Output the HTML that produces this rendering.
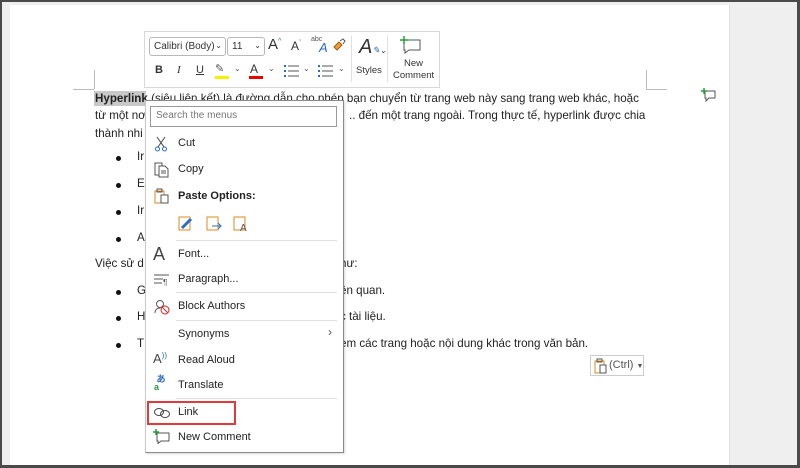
<!DOCTYPE html>
<html><head><meta charset="utf-8"><style>
*{margin:0;padding:0;box-sizing:border-box}
body{width:800px;height:468px;overflow:hidden;background:#fff;font-family:"Liberation Sans",sans-serif;position:relative}
.frame{position:absolute;left:0;top:0;width:800px;height:468px;border:2px solid #4a4a4a;border-right-width:3px;border-bottom-width:3px;background:#efefef}
.page{position:absolute;left:10px;top:5px;width:720px;height:460px;background:#fff;border-right:1px solid #e0e0e0}
.a{position:absolute;white-space:nowrap}
.t{font-size:11.6px;color:#222}
.dot{position:absolute;width:5px;height:5px;border-radius:50%;background:#111}
.mt{position:absolute;left:144px;top:31px;width:296px;height:57px;background:#fff;border:1px solid #d8d8d8}
.cb{position:absolute;border:1px solid #b8b8b8;border-radius:3px;height:19px;font-size:10px;color:#333;padding:3px 0 0 4px}
.menu{position:absolute;left:145px;top:100px;width:199px;height:353px;background:#fff;border:1px solid #8a8a8a;border-left-color:#c8c8c8;box-shadow:1px 1px 2px rgba(0,0,0,.15)}
.mi{position:absolute;left:32px;font-size:11px;color:#222}
.sep{position:absolute;left:30px;right:6px;height:1px;background:#e0e0e0}
.ic{position:absolute}
</style></head><body>
<div class="frame"></div>
<div class="page"></div>
<div class="a" style="left:94px;top:70px;width:1px;height:19px;background:#bbb"></div>
<div class="a" style="left:73px;top:89px;width:21px;height:1px;background:#bbb"></div>
<div class="a" style="left:646px;top:70px;width:1px;height:19px;background:#bbb"></div>
<div class="a" style="left:646px;top:89px;width:21px;height:1px;background:#bbb"></div>
<div class="a" style="left:94px;top:91px;width:52px;height:15px;background:#c8c8c8"></div>
<div class="a t" style="left:95px;top:92px"><b>Hyperlink</b> <span style="text-decoration:underline">(siêu liên kết) là đường dẫn cho phép</span> bạn chuyển từ trang web này sang trang web khác, hoặc</div>
<div class="a t" style="left:95px;top:109px">từ một nơ</div>
<div class="a t" style="left:349px;top:109px">.. đến một trang ngoài. Trong thực tế, hyperlink được chia</div>
<div class="a t" style="left:95px;top:127px">thành nhi</div>
<div class="dot" style="left:116px;top:156px"></div><div class="a t" style="left:137px;top:150px">Ir</div>
<div class="dot" style="left:116px;top:183px"></div><div class="a t" style="left:137px;top:177px">E</div>
<div class="dot" style="left:116px;top:210px"></div><div class="a t" style="left:137px;top:204px">Ir</div>
<div class="dot" style="left:116px;top:237px"></div><div class="a t" style="left:137px;top:231px">A</div>
<div class="a t" style="left:95px;top:257px">Việc sử d</div><div class="a t" style="left:340px;top:257px">hư:</div>
<div class="dot" style="left:116px;top:290px"></div><div class="a t" style="left:137px;top:284px">G</div><div class="a t" style="left:340px;top:284px">ên quan.</div>
<div class="dot" style="left:116px;top:316px"></div><div class="a t" style="left:137px;top:310px">H</div><div class="a t" style="left:340px;top:310px">c tài liệu.</div>
<div class="dot" style="left:116px;top:343px"></div><div class="a t" style="left:137px;top:337px">T</div><div class="a t" style="left:340px;top:337px">em các trang hoặc nội dung khác trong văn bản.</div>
<svg class="ic" style="left:701px;top:88px" width="16" height="14" viewBox="0 0 16 14"><path d="M4 3h10v7H8l-3 3v-3H4z" fill="none" stroke="#555"/><path d="M3 0v6M0 3h6" stroke="#2a9d3a" stroke-width="1.5"/></svg>
<div class="a" style="left:590px;top:355px;width:54px;height:21px;border:1px solid #ccc;background:#fff"></div>
<svg class="ic" style="left:594px;top:358px" width="14" height="16" viewBox="0 0 14 16"><rect x="1" y="3" width="9" height="12" fill="none" stroke="#e08a1e"/><rect x="6" y="7" width="6" height="8" fill="#fff" stroke="#555"/><rect x="3" y="1" width="5" height="3" fill="none" stroke="#555"/></svg>
<div class="a" style="left:609px;top:359px;font-size:11px;color:#555">(Ctrl) <span style="font-size:7px">▼</span></div>
<div class="mt"></div>
<div class="cb" style="left:149px;top:37px;width:77px">Calibri (Body)<span style="position:absolute;right:3px;top:3px;font-size:8px">⌄</span></div>
<div class="cb" style="left:227px;top:37px;width:38px">11<span style="position:absolute;right:3px;top:3px;font-size:8px">⌄</span></div>
<div class="a" style="left:268px;top:36px;font-size:15px;color:#333">A<sup style="font-size:7px;color:#2b6cc4">^</sup></div>
<div class="a" style="left:291px;top:39px;font-size:12px;color:#333">A<sup style="font-size:7px;color:#2b6cc4">ˇ</sup></div>
<div class="a" style="left:311px;top:36px;font-size:7px;color:#555">abc</div><div class="a" style="left:319px;top:40px;font-size:13px;color:#2b6cc4;font-style:italic">A</div>
<svg class="ic" style="left:332px;top:38px" width="14" height="14" viewBox="0 0 14 14"><path d="M2 9l5-5 3 3-5 5z" fill="#f0a030" stroke="#a05a10"/><path d="M8 3l3-2 2 2-2 3" fill="none" stroke="#555"/></svg>
<div class="a" style="left:351px;top:36px;width:1px;height:46px;background:#e0e0e0"></div>
<div class="a" style="left:359px;top:36px;font-size:20px;color:#333;font-style:italic">A<span style="font-size:9px;color:#2b6cc4">✎</span><span style="font-size:8px">⌄</span></div>
<div class="a" style="left:356px;top:65px;font-size:9.5px;color:#333">Styles</div>
<div class="a" style="left:387px;top:36px;width:1px;height:46px;background:#e0e0e0"></div>
<svg class="ic" style="left:400px;top:36px" width="22" height="18" viewBox="0 0 22 18"><path d="M4 4h16v10H9l-4 3v-3H4z" fill="none" stroke="#555"/><path d="M4 0v8M0 4h8" stroke="#2a9d3a" stroke-width="1.5"/></svg>
<div class="a" style="left:404px;top:58px;font-size:9.5px;color:#333">New</div>
<div class="a" style="left:393px;top:70px;font-size:9.5px;color:#333">Comment</div>
<div class="a" style="left:155px;top:64px;font-size:11px;font-weight:bold;color:#333">B</div>
<div class="a" style="left:177px;top:64px;font-size:11px;font-style:italic;font-family:'Liberation Serif',serif;color:#333">I</div>
<div class="a" style="left:196px;top:64px;font-size:11px;text-decoration:underline;color:#333">U</div>
<div class="a" style="left:215px;top:62px;font-size:11px;color:#555">✎</div><div class="a" style="left:215px;top:76px;width:14px;height:3px;background:#f5f000"></div><div class="a" style="left:234px;top:64px;font-size:8px;color:#555">⌄</div>
<div class="a" style="left:250px;top:62px;font-size:12px;color:#333">A</div><div class="a" style="left:249px;top:76px;width:14px;height:3px;background:#e00"></div><div class="a" style="left:268px;top:64px;font-size:8px;color:#555">⌄</div>
<svg class="ic" style="left:284px;top:64px" width="16" height="13" viewBox="0 0 16 13"><g fill="#2b6cc4"><rect x="0" y="1" width="2" height="2"/><rect x="0" y="6" width="2" height="2"/><rect x="0" y="11" width="2" height="2"/></g><g stroke="#555"><path d="M4 2h11M4 7h11M4 12h11"/></g></svg><div class="a" style="left:303px;top:64px;font-size:8px;color:#555">⌄</div>
<svg class="ic" style="left:318px;top:64px" width="16" height="13" viewBox="0 0 16 13"><g fill="#2b6cc4"><rect x="0" y="1" width="2" height="2"/><rect x="0" y="6" width="2" height="2"/><rect x="0" y="11" width="2" height="2"/></g><g stroke="#555"><path d="M4 2h11M4 7h11M4 12h11"/></g></svg><div class="a" style="left:338px;top:64px;font-size:8px;color:#555">⌄</div>
<div class="menu">
<div class="a" style="left:4px;top:5px;width:187px;height:21px;border:1px solid #999;font-size:10px;color:#777;padding:3px 0 0 5px">Search the menus</div>
<svg class="ic" style="left:8px;top:35px" width="14" height="16" viewBox="0 0 14 16"><path d="M3 1l7 10M11 1L4 11" stroke="#444"/><circle cx="3.5" cy="13" r="2" fill="none" stroke="#2b6cc4"/><circle cx="10.5" cy="13" r="2" fill="none" stroke="#2b6cc4"/></svg>
<div class="mi" style="top:36px">Cut</div>
<svg class="ic" style="left:8px;top:61px" width="16" height="16" viewBox="0 0 16 16"><path d="M1 1h7v12H1z" fill="none" stroke="#555"/><path d="M5 4h6l3 3v8H5z" fill="#fff" stroke="#555"/><path d="M7 9h5M7 11h5" stroke="#555"/></svg>
<div class="mi" style="top:62px">Copy</div>
<svg class="ic" style="left:8px;top:87px" width="16" height="16" viewBox="0 0 16 16"><rect x="1" y="3" width="9" height="12" fill="none" stroke="#e08a1e"/><rect x="7" y="7" width="7" height="8" fill="#fff" stroke="#555"/><rect x="3" y="1" width="5" height="3" fill="none" stroke="#555"/></svg>
<div class="mi" style="top:89px;font-weight:bold">Paste Options:</div>
<svg class="ic" style="left:32px;top:113px" width="16" height="18" viewBox="0 0 16 18"><rect x="1" y="3" width="11" height="13" fill="none" stroke="#e08a1e"/><path d="M4 14l9-9" stroke="#2b6cc4" stroke-width="3"/></svg>
<svg class="ic" style="left:60px;top:113px" width="16" height="18" viewBox="0 0 16 18"><rect x="1" y="3" width="11" height="13" fill="none" stroke="#e08a1e"/><path d="M6 12h9M12 9l3 3-3 3" fill="none" stroke="#2b6cc4"/></svg>
<svg class="ic" style="left:87px;top:113px" width="16" height="18" viewBox="0 0 16 18"><rect x="1" y="3" width="11" height="13" fill="none" stroke="#e08a1e"/><text x="7" y="17" font-size="10" fill="#555" font-family="Liberation Sans">A</text></svg>
<div class="sep" style="top:139px"></div>
<div class="a" style="left:7px;top:143px;font-size:18px;color:#444">A</div>
<div class="mi" style="top:147px">Font...</div>
<svg class="ic" style="left:8px;top:173px" width="16" height="12" viewBox="0 0 16 12"><path d="M0 1h15M0 5h9M0 9h8" stroke="#555"/><text x="9" y="11" font-size="8" fill="#555">¶</text></svg>
<div class="mi" style="top:172px">Paragraph...</div>
<div class="sep" style="top:191px"></div>
<svg class="ic" style="left:8px;top:198px" width="16" height="16" viewBox="0 0 16 16"><circle cx="6" cy="5" r="3.5" fill="none" stroke="#555"/><path d="M1 14c0-4 3-5 5-5" fill="none" stroke="#555"/><circle cx="11" cy="11" r="4" fill="#fff" stroke="#d22"/><path d="M8 8l6 6" stroke="#d22"/></svg>
<div class="mi" style="top:199px">Block Authors</div>
<div class="sep" style="top:219px"></div>
<div class="mi" style="top:227px">Synonyms</div>
<div class="a" style="left:182px;top:224px;font-size:12px;color:#555">›</div>
<div class="a" style="left:7px;top:250px;font-size:13px;color:#444">A<span style="font-size:8px;color:#2b6cc4;vertical-align:top">))</span></div>
<div class="mi" style="top:253px">Read Aloud</div>
<div class="a" style="left:8px;top:274px;font-size:9px;line-height:8px;color:#2b6cc4;font-weight:bold">&nbsp;あ<br><span style="color:#2a9d3a">a</span></div>
<div class="mi" style="top:278px">Translate</div>
<div class="sep" style="top:297px"></div>
<div class="a" style="left:1px;top:300px;width:89px;height:24px;border:2px solid #e23a3a"></div>
<svg class="ic" style="left:8px;top:306px" width="16" height="12" viewBox="0 0 16 12"><ellipse cx="5" cy="5" rx="4.5" ry="3.5" fill="none" stroke="#444"/><ellipse cx="11" cy="7" rx="4.5" ry="3.5" fill="none" stroke="#444"/></svg>
<div class="mi" style="top:305px">Link</div>
<svg class="ic" style="left:7px;top:328px" width="17" height="15" viewBox="0 0 17 15"><path d="M4 4h12v8H8l-3 2.5V12H4z" fill="none" stroke="#555"/><path d="M3 0v6M0 3h6" stroke="#2a9d3a" stroke-width="1.5"/></svg>
<div class="mi" style="top:330px">New Comment</div>
</div>
</body></html>
